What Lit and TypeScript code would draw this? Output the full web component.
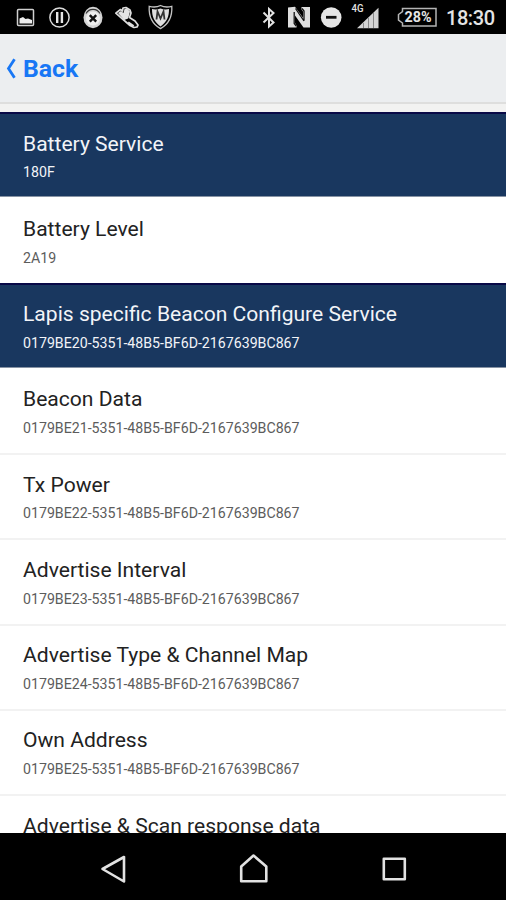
import { LitElement, html, css, svg } from "lit";
import { customElement, property } from "lit/decorators.js";

interface Entry {
  name: string;
  id: string;
  service?: boolean;
}

const uuid = (n: number) => `0179BE${n}-5351-48B5-BF6D-2167639BC867`;

const entries: Entry[] = [
  { name: "Battery Service", id: "180F", service: true },
  { name: "Battery Level", id: "2A19" },
  { name: "Lapis specific Beacon Configure Service", id: uuid(20), service: true },
  { name: "Beacon Data", id: uuid(21) },
  { name: "Tx Power", id: uuid(22) },
  { name: "Advertise Interval", id: uuid(23) },
  { name: "Advertise Type & Channel Map", id: uuid(24) },
  { name: "Own Address", id: uuid(25) },
  { name: "Advertise & Scan response data", id: uuid(26) },
];

@customElement("status-bar")
class StatusBar extends LitElement {
  static styles = css`
    :host { display: block; height: 34px; background: #000; }
    .bar { display: block; width: 506px; height: 34px; }
    .text { font-family: Roboto, "Open Sans", sans-serif; fill: #e4e4e4; }
    .clock { font-size: 20px; font-weight: 500; }
    .net { font-size: 10px; font-weight: 500; }
    .charge { font-size: 14px; font-weight: 700; }
  `;
  render() {
    return html`<svg class="bar" viewBox="0 0 506 34" fill="none">
      ${svg`
      <rect x="17.500" y="9.500" width="16" height="16" rx="1" stroke="#d0d0d0" stroke-width="1.500"/>
      <path d="M19.500 23.500V18.500l3.500-1.500 2.500 2 2.500-.5 4 1.500v3.500z" fill="#eee"/>
      <circle cx="59.500" cy="17.500" r="9.600" stroke="#dcdcdc" stroke-width="1.500"/>
      <path d="M57.200 12v11M61.900 12v11" stroke="#e6e6e6" stroke-width="2.400"/>
      <ellipse cx="93" cy="17.500" rx="9.500" ry="10.700" fill="#d4d4d4"/>
      <path d="M86 13.500a8 8 0 0 1 14 0" stroke="#333" stroke-width="1.100"/>
      <circle cx="93" cy="18.500" r="7" fill="#eee"/>
      <path d="M89.800 15.200l6.400 6.400m0-6.400l-6.400 6.400" stroke="#111" stroke-width="2.400"/>
      <path d="M115.800 13.200l4.700-3.700 2 1.500.5-3 3-.5 4 2.500 1 3-1.500 4.500 5.500 3.500 3 4-1 2-3 .5-4-2z" stroke="#dedede" stroke-width="1.700" stroke-linejoin="round"/>
      <path d="M118 13l3-2 2.500 2 1-4 2.500-.5 3 3-1.800 7-4 1.500z" fill="#e4e4e4"/>
      <path d="M128 22.500l5.500 3.800" stroke="#dedede" stroke-width="2.600"/>
      <path d="M160.500 5.500c3 1.500 7.500 1.800 11.300.8.500 9-1.300 17-11.300 22.300-10-5.300-11.800-13.300-11.300-22.300 3.800 1 8.300.7 11.300-.8z" stroke="#c4c4c4" stroke-width="1.300"/>
      <path d="M160.500 8.500c2.500 1 5.500 1.200 8.500.6 0 7-1.500 12.500-8.500 17.300-7-4.800-8.500-10.300-8.500-17.300 3 .6 6 .4 8.500-.6z" fill="#dedede"/>
      <path d="M156.500 19.500l1-8 3 7 3-7 1 8" stroke="#333" stroke-width="1.800"/>
      <path d="M263.500 12.500l10 10-4.500 4V9l4.500 4-10 9.500" stroke="#e2e2e2" stroke-width="2"/>
      <path d="M288 7.500l7-.8 8 11V11.500l-1.500-2V7h8.500v20.500h-6.500l-8.500-12v7.500l1.500 2.500v2H288z" fill="#dedede"/>
      <path d="M294.200 12v11.500l2 2.500M295.500 8.500l8.500 12.500M304 20.500V11l-2-2.500" stroke="#111" stroke-width="1.300"/>
      <circle cx="331.200" cy="17.500" r="10.300" fill="#e6e6e6"/>
      <path d="M326 17.300h10.500" stroke="#111" stroke-width="2.800"/>
      <path d="M357 28.200l21.500-20.500v20.500z" fill="#d4d4d4"/>
      <path d="M363.500 23v5M368.500 18v10M373.500 13v15" stroke="#888" stroke-width="1"/>
      <path d="M402.500 8.500H436v17.500h-33.500v-3l-4-3v-5.500l4-3z" stroke="#b4b4b4" stroke-width="1.500"/>
      <text class="text net" x="351.500" y="12.200" textLength="12" lengthAdjust="spacingAndGlyphs">4G</text>
      <text class="text charge" x="404.500" y="22.200" textLength="27" lengthAdjust="spacingAndGlyphs">28%</text>
      <text class="text clock" x="446" y="24.900" textLength="49">18:30</text>`}
    </svg>`;
  }
}

@customElement("service-row")
class ServiceRow extends LitElement {
  @property({ attribute: false }) entry!: Entry;
  @property({ type: Boolean }) divided = false;
  static styles = css`
    :host { display: block; height: 85.250px; flex: none; }
    .row {
      box-sizing: border-box; height: 100%; padding: 17.700px 23px 0;
      background: #fff; white-space: nowrap;
    }
    .divided { border-top: 2px solid #f2f2f2; padding-top: 15.700px; }
    .service { background: #19375f; border-top: 2px solid #090947; border-bottom: 1px solid #8793a4; padding-top: 15.700px; }
    .name { font-size: 21.080px; line-height: 28px; color: #222; }
    .id { font-size: 14.180px; line-height: 18px; margin-top: 5.800px; color: #5c5c5c; }
    .service .name, .service .id { color: #f2f4f8; }
  `;
  render() {
    const { name, id, service } = this.entry;
    return html`<div class="row ${service ? "service" : this.divided ? "divided" : ""}">
      <div class="name">${name}</div>
      <div class="id">${id}</div>
    </div>`;
  }
}

@customElement("app-root")
class AppRoot extends LitElement {
  static styles = css`
    :host {
      display: flex; flex-direction: column; width: 506px; height: 900px;
      overflow: hidden; background: #fff; font-family: Roboto, "Open Sans", sans-serif;
    }
    .header {
      box-sizing: border-box; height: 70px; flex: none; display: flex; align-items: center;
      gap: 6px; padding: 2px 0 0 6px; background: #eceef0; border-bottom: 2px solid #dededd;
    }
    .chevron { width: 11px; height: 22px; }
    .back { font-size: 24.800px; line-height: 30px; font-weight: 700; color: #1877f5; }
    .gap { height: 8px; flex: none; background: #f2f2f1; }
    .list { flex: 1; min-height: 0; overflow: hidden; display: flex; flex-direction: column; }
    .nav { height: 67px; flex: none; background: #000; }
    .keys { display: block; width: 506px; height: 67px; }
  `;
  render() {
    return html`
      <status-bar></status-bar>
      <div class="header">
        <svg class="chevron" viewBox="0 0 11 22" fill="none"><path d="M8.500 1.200L2.500 10.500l6 9.300" stroke="#1877f5" stroke-width="2.800"/></svg>
        <span class="back">Back</span>
      </div>
      <div class="gap"></div>
      <div class="list">${entries.map(
        (e, i) => html`<service-row .entry=${e} ?divided=${i > 0 && !entries[i - 1].service}></service-row>`
      )}</div>
      <div class="nav">
        <svg class="keys" viewBox="0 0 506 67" fill="none" stroke="#e2e2e2" stroke-width="2.600" stroke-linejoin="round">
          <path d="M102.500 36L124 24v24.500z"/>
          <path d="M241.200 48.200V33.500l12.300-11 12.800 11v14.700z"/>
          <rect x="383.800" y="25.800" width="21" height="20.500"/>
        </svg>
      </div>`;
  }
}
